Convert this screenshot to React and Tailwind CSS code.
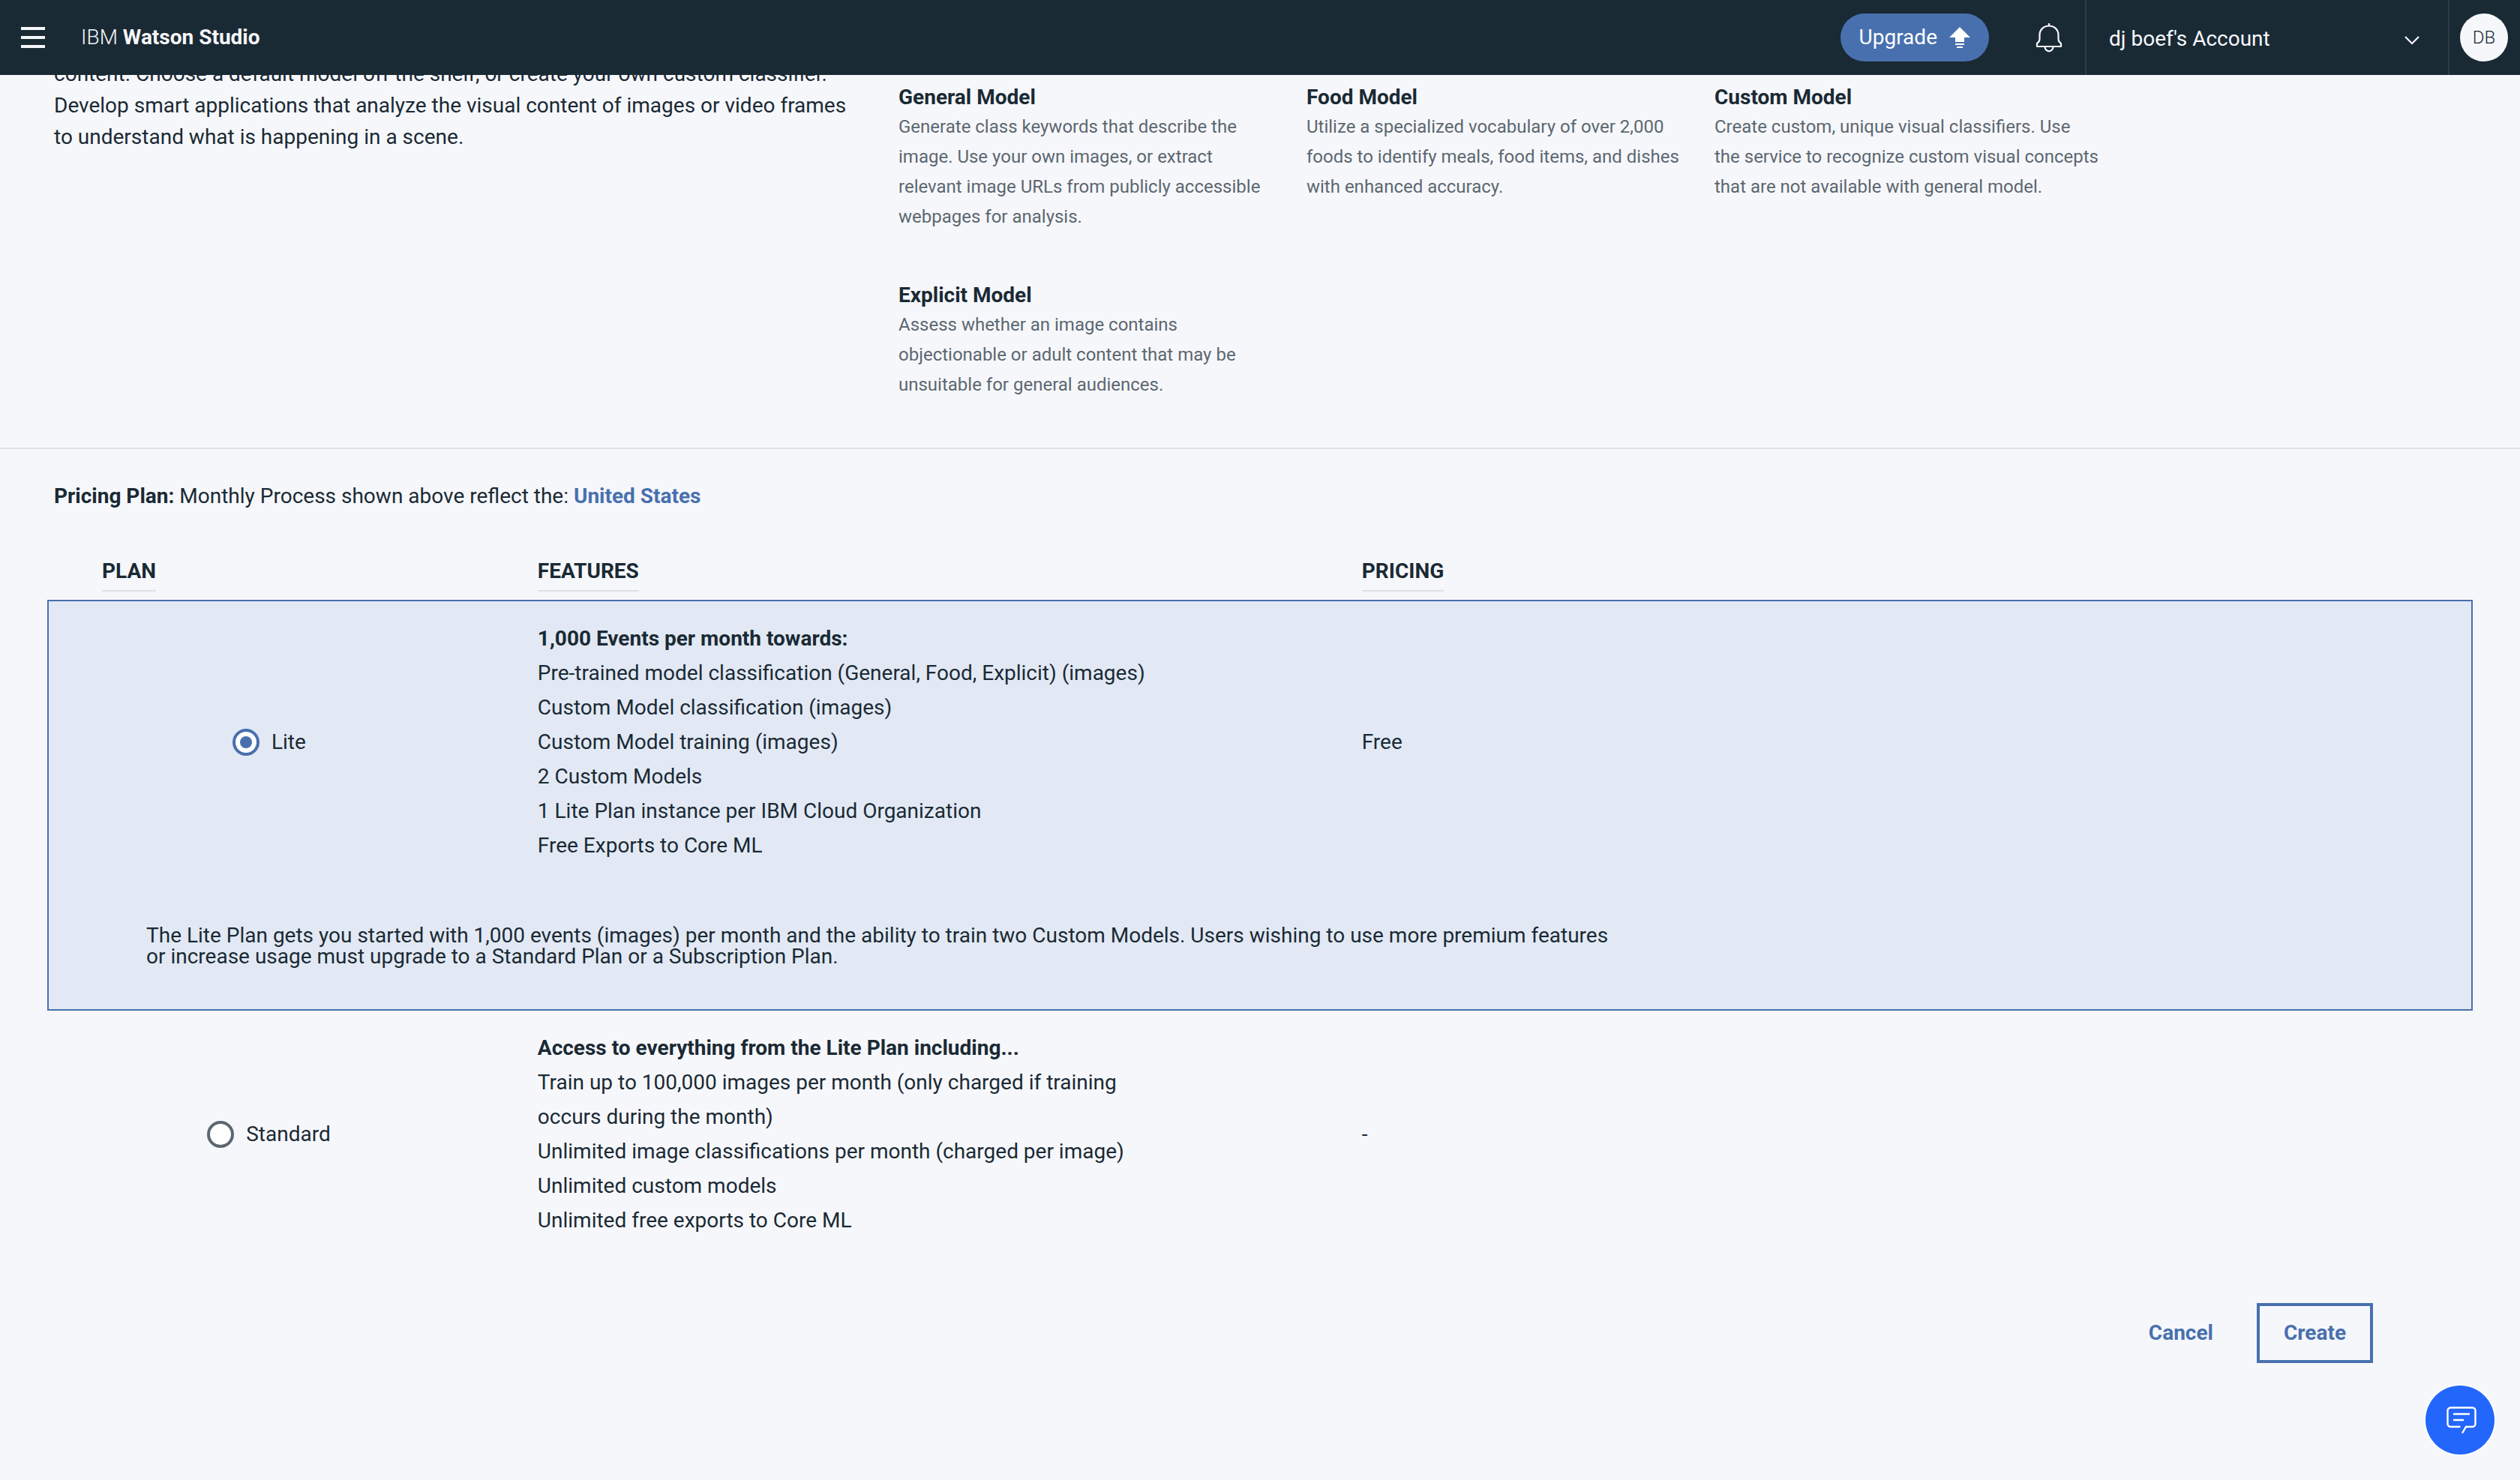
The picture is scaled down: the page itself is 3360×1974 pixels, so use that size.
import React, { useState } from "react";

const MODELS = [
  {
    name: "General Model",
    lines: [
      "Generate class keywords that describe the",
      "image. Use your own images, or extract",
      "relevant image URLs from publicly accessible",
      "webpages for analysis.",
    ],
  },
  {
    name: "Food Model",
    lines: [
      "Utilize a specialized vocabulary of over 2,000",
      "foods to identify meals, food items, and dishes",
      "with enhanced accuracy.",
    ],
  },
  {
    name: "Custom Model",
    lines: [
      "Create custom, unique visual classifiers. Use",
      "the service to recognize custom visual concepts",
      "that are not available with general model.",
    ],
  },
  {
    name: "Explicit Model",
    lines: [
      "Assess whether an image contains",
      "objectionable or adult content that may be",
      "unsuitable for general audiences.",
    ],
  },
];

const PLANS = [
  {
    id: "lite",
    name: "Lite",
    heading: "1,000 Events per month towards:",
    features: [
      ["Pre-trained model classification (General, Food, Explicit) (images)"],
      ["Custom Model classification (images)"],
      ["Custom Model training (images)"],
      ["2 Custom Models"],
      ["1 Lite Plan instance per IBM Cloud Organization"],
      ["Free Exports to Core ML"],
    ],
    price: "Free",
    note: [
      "The Lite Plan gets you started with 1,000 events (images) per month and the ability to train two Custom Models. Users wishing to use more premium features",
      "or increase usage must upgrade to a Standard Plan or a Subscription Plan.",
    ],
  },
  {
    id: "standard",
    name: "Standard",
    heading: "Access to everything from the Lite Plan including...",
    features: [
      ["Train up to 100,000 images per month (only charged if training", "occurs during the month)"],
      ["Unlimited image classifications per month (charged per image)"],
      ["Unlimited custom models"],
      ["Unlimited free exports to Core ML"],
    ],
    price: "-",
  },
];

function Lines({ lines }) {
  return lines.map((line, i) => (
    <React.Fragment key={line}>
      {i > 0 && <br />}
      {line}
    </React.Fragment>
  ));
}

function MenuIcon() {
  return (
    <svg className="h-7 w-8" viewBox="0 0 32 28" fill="currentColor" aria-hidden="true">
      <path d="M0 0h32v4H0zM0 12h32v4H0zM0 24h32v4H0z" />
    </svg>
  );
}

function UpgradeIcon() {
  return (
    <svg className="size-7" viewBox="0 0 28 28" fill="currentColor" aria-hidden="true">
      <path d="M14 0l14 14h-8v6H8v-6H0zM8 22h12v2H8zM10 26h8v2h-8z" />
    </svg>
  );
}

function BellIcon() {
  return (
    <svg className="h-10 w-9" viewBox="0 0 36 40" fill="none" stroke="currentColor" strokeWidth="2.2" aria-hidden="true">
      <path d="M18 1v3.5" />
      <path d="M18 4.5c-7 0-12.5 5-12.5 12.2v5.3c0 2-.4 2.9-1.4 3.9L2 28v4h32v-4l-2.1-2.1c-1-1-1.4-1.9-1.4-3.9v-5.3C30.500 9.500 25 4.500 18 4.500z" strokeLinejoin="round" />
      <path d="M12.5 32.5a5.5 5.8 0 0 0 11 0" />
    </svg>
  );
}

function ChevronIcon() {
  return (
    <svg className="h-3 w-5" viewBox="0 0 20 12" fill="none" stroke="currentColor" strokeWidth="2.2" aria-hidden="true">
      <path d="M1 1l9 9 9-9" />
    </svg>
  );
}

function ChatIcon() {
  return (
    <svg className="h-9 w-10" viewBox="0 0 40 36" fill="none" stroke="currentColor" strokeWidth="2.4" aria-hidden="true">
      <path d="M18.5 27H5.500a4 4 0 0 1-4-4V5.500a4 4 0 0 1 4-4h29a4 4 0 0 1 4 4V23a4 4 0 0 1-4 4H26l-5 8.500" />
      <path d="M9 10h22M9 18h14" />
    </svg>
  );
}

function Header() {
  return (
    <header className="sticky top-0 z-10 flex h-[100px] items-center bg-[#1a2a34] text-[#f6f7fb]">
      <button type="button" aria-label="Menu" className="ml-7">
        <MenuIcon />
      </button>
      <a href="#home" className="ml-12">
        <span className="font-light">IBM</span> <span className="font-bold">Watson Studio</span>
      </a>
      <button type="button" className="ml-auto flex h-16 items-center gap-4 rounded-full bg-[#4870ae] px-[25px] text-white">
        Upgrade
        <UpgradeIcon />
      </button>
      <button type="button" aria-label="Notifications" className="mr-[30px] ml-[62px]">
        <BellIcon />
      </button>
      <div className="relative h-full w-[484px] border-l-2 border-[#2d3c47]">
        <select aria-label="Account" className="h-full w-full appearance-none bg-transparent px-[30px] pt-1">
          <option>dj boef's Account</option>
        </select>
        <span className="pointer-events-none absolute inset-y-0 right-[38px] flex items-center pt-2">
          <ChevronIcon />
        </span>
      </div>
      <div className="flex h-full items-center border-l-2 border-[#2d3c47] pr-4 pl-[14px]">
        <button type="button" aria-label="Profile" className="size-16 rounded-full bg-[#f6f7fb] text-2xl font-light text-[#1a2a34]">
          DB
        </button>
      </div>
    </header>
  );
}

function Overview() {
  return (
    <section className="flex border-b-2 border-[#dfe0e4] pb-16">
      <p className="w-[1198px] shrink-0 pl-[72px] leading-[42px]">
        content. Choose a default model off the shelf, or create your own custom classifier.
        <br />
        Develop smart applications that analyze the visual content of images or video frames
        <br />
        to understand what is happening in a scene.
      </p>
      <div className="grid grid-cols-[repeat(3,544px)] gap-y-[66px] pt-[33px]">
        {MODELS.map((m) => (
          <article key={m.name}>
            <h3 className="leading-[38px] font-bold">{m.name}</h3>
            <p className="text-2xl leading-10 text-[#5c6770]">
              <Lines lines={m.lines} />
            </p>
          </article>
        ))}
      </div>
    </section>
  );
}

function ColumnHead({ children, className }) {
  return (
    <th scope="col" className={className}>
      <span className="inline-block border-b-2 border-[#dfe0e4] pb-1 leading-[42px] font-bold">{children}</span>
    </th>
  );
}

function PlanRows({ plan, selected, onSelect }) {
  return (
    <tbody className={selected ? "border-2 border-[#4870ae] bg-[#e2e9f4]" : ""}>
      <tr>
        <td className="pr-[136px] pl-[72px]">
          <label className="flex items-center justify-center gap-4">
            <input
              type="radio"
              name="plan"
              value={plan.id}
              checked={selected}
              onChange={() => onSelect(plan.id)}
              className="grid size-9 appearance-none place-content-center rounded-full border-4 border-[#5c6770] bg-white checked:border-[#4870ae] checked:before:size-4 checked:before:rounded-full checked:before:bg-[#4870ae]"
            />
            {plan.name}
          </label>
        </td>
        <td className="py-[27px] leading-[46px]">
          <h4 className="font-bold">{plan.heading}</h4>
          <ul>
            {plan.features.map((f) => (
              <li key={f[0]}>
                <Lines lines={f} />
              </li>
            ))}
          </ul>
        </td>
        <td>{plan.price}</td>
      </tr>
      {plan.note && (
        <tr>
          <td colSpan={3} className="pt-14 pb-[56px] pl-[130px] leading-7">
            <Lines lines={plan.note} />
          </td>
        </tr>
      )}
    </tbody>
  );
}

function Pricing() {
  const [plan, setPlan] = useState("lite");
  return (
    <section className="pt-[42px]">
      <p className="pl-[72px] leading-[42px]">
        <span className="font-bold">Pricing Plan:</span> Monthly Process shown above reflect the:{" "}
        <a href="#region" className="font-bold text-[#4870ae]">
          United States
        </a>
      </p>
      <div className="mx-[63px] mt-[58px]">
        <table className="w-full table-fixed border-collapse text-left">
          <colgroup>
            <col className="w-[20.2%]" />
            <col className="w-[34%]" />
            <col />
          </colgroup>
          <thead>
            <tr className="h-[60px] align-top">
              <ColumnHead className="pl-[72px]">PLAN</ColumnHead>
              <ColumnHead>FEATURES</ColumnHead>
              <ColumnHead>PRICING</ColumnHead>
            </tr>
          </thead>
          {PLANS.map((p) => (
            <PlanRows key={p.id} plan={p} selected={plan === p.id} onSelect={setPlan} />
          ))}
        </table>
      </div>
      <div className="mt-[60px] flex justify-end gap-[26px] pr-[196px] pb-16 font-bold text-[#4870ae]">
        <button type="button" className="h-20 px-8">
          Cancel
        </button>
        <button type="button" className="h-20 border-4 border-[#4870ae] px-8">
          Create
        </button>
      </div>
    </section>
  );
}

export default function App() {
  return (
    <div className="min-h-screen bg-[#f6f7fb] font-[Roboto,sans-serif] text-[28px] leading-[42px] text-[#1a2a34]">
      <Header />
      <main className="-mt-[22px]">
        <Overview />
        <Pricing />
      </main>
      <button
        type="button"
        aria-label="Open chat"
        className="fixed right-[34px] bottom-[34px] flex size-[92px] items-center justify-center rounded-full bg-[#2366fb] pl-1 text-white ring-2 ring-white"
      >
        <ChatIcon />
      </button>
    </div>
  );
}
